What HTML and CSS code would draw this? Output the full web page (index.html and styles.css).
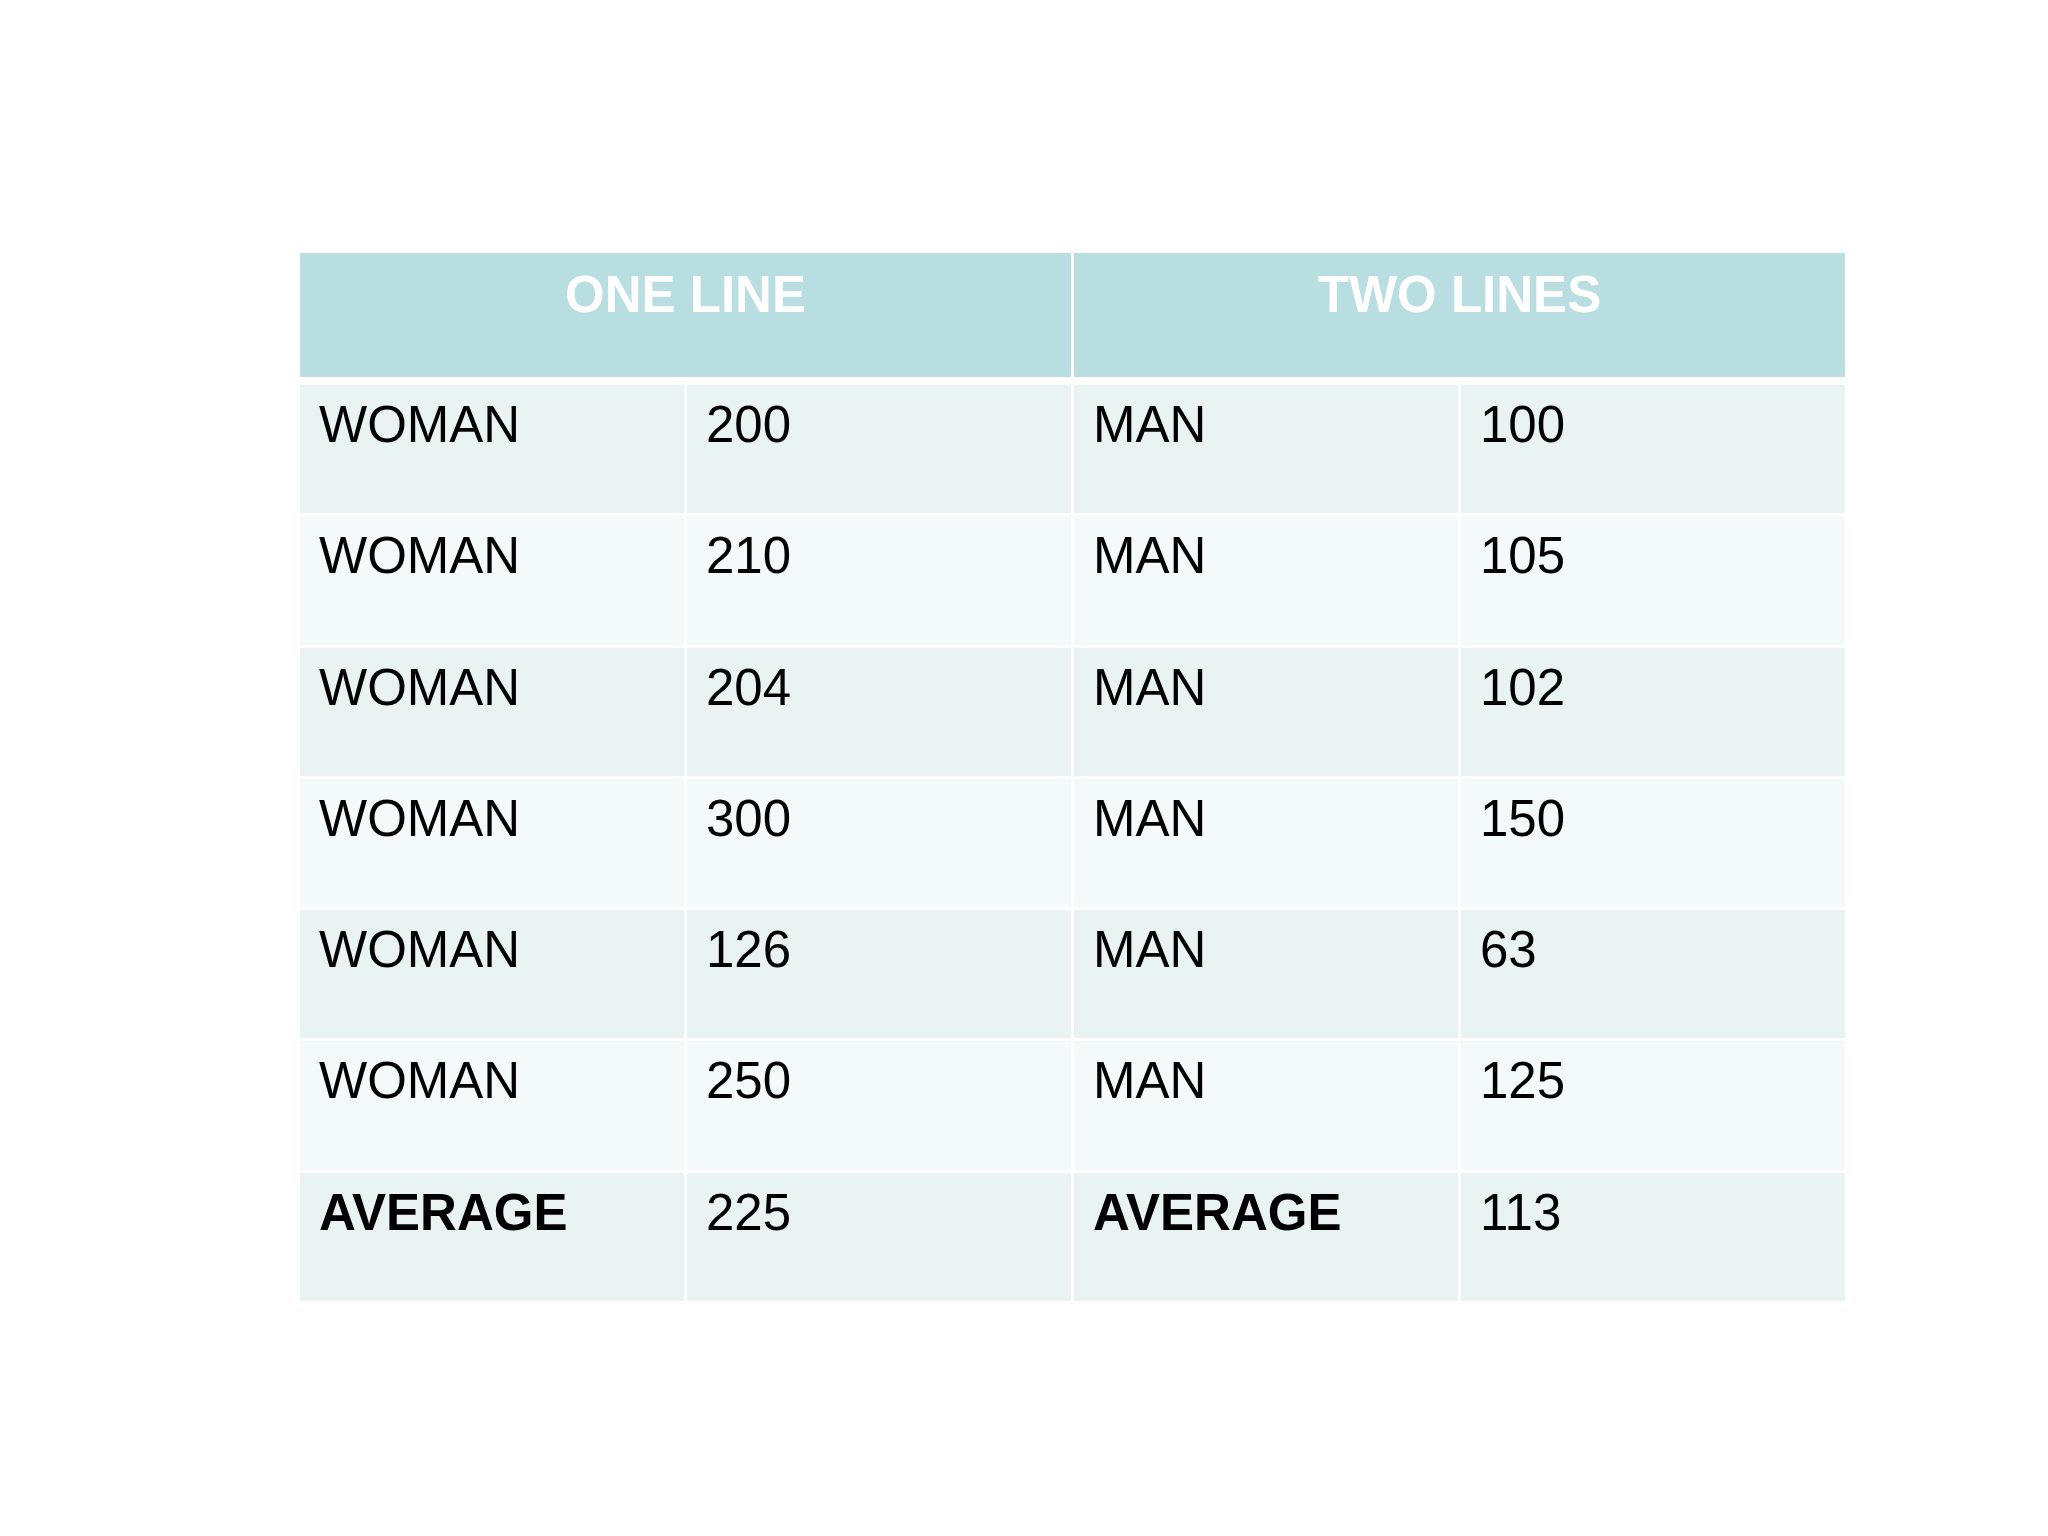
FILE: index.html
```html
<!DOCTYPE html>
<html>
<head>
<meta charset="utf-8">
<link rel="stylesheet" href="styles.css">
</head>
<body>
<div class="page">
  <div class="table">
    <div class="hcell">ONE LINE</div>
    <div class="hcell">TWO LINES</div>

    <div class="cell odd">WOMAN</div><div class="cell odd">200</div><div class="cell odd">MAN</div><div class="cell odd">100</div>
    <div class="cell even">WOMAN</div><div class="cell even">210</div><div class="cell even">MAN</div><div class="cell even">105</div>
    <div class="cell odd">WOMAN</div><div class="cell odd">204</div><div class="cell odd">MAN</div><div class="cell odd">102</div>
    <div class="cell even">WOMAN</div><div class="cell even">300</div><div class="cell even">MAN</div><div class="cell even">150</div>
    <div class="cell odd">WOMAN</div><div class="cell odd">126</div><div class="cell odd">MAN</div><div class="cell odd">63</div>
    <div class="cell even">WOMAN</div><div class="cell even">250</div><div class="cell even">MAN</div><div class="cell even">125</div>
    <div class="cell odd bold">AVERAGE</div><div class="cell odd">225</div><div class="cell odd bold">AVERAGE</div><div class="cell odd">113</div>
  </div>
</div>
</body>
</html>
```
FILE: styles.css
```css
html, body {
  margin: 0;
  padding: 0;
  background: #ffffff;
}
.page {
  padding: 253px 0 0 300px;
  font-family: "Liberation Sans", Arial, sans-serif;
}
.table {
  width: 1545px;
  display: grid;
  grid-template-columns: repeat(4, 1fr);
  grid-template-rows: 129px repeat(7, 128.3px);
  column-gap: 3px;
  row-gap: 3px;
}
.hcell {
  grid-column: span 2;
  background: #b9dee2;
  color: #ffffff;
  font-weight: bold;
  font-size: 51px;
  text-align: center;
  padding-top: 12px;
  margin-bottom: 5px;
  box-sizing: border-box;
}
.cell {
  font-size: 51px;
  color: #000000;
  padding: 10px 0 0 19px;
  box-sizing: border-box;
}
.cell.odd {
  background: #e8f3f2;
}
.cell.even {
  background: #f4f9f9;
}
.cell.bold {
  font-weight: bold;
}
```
